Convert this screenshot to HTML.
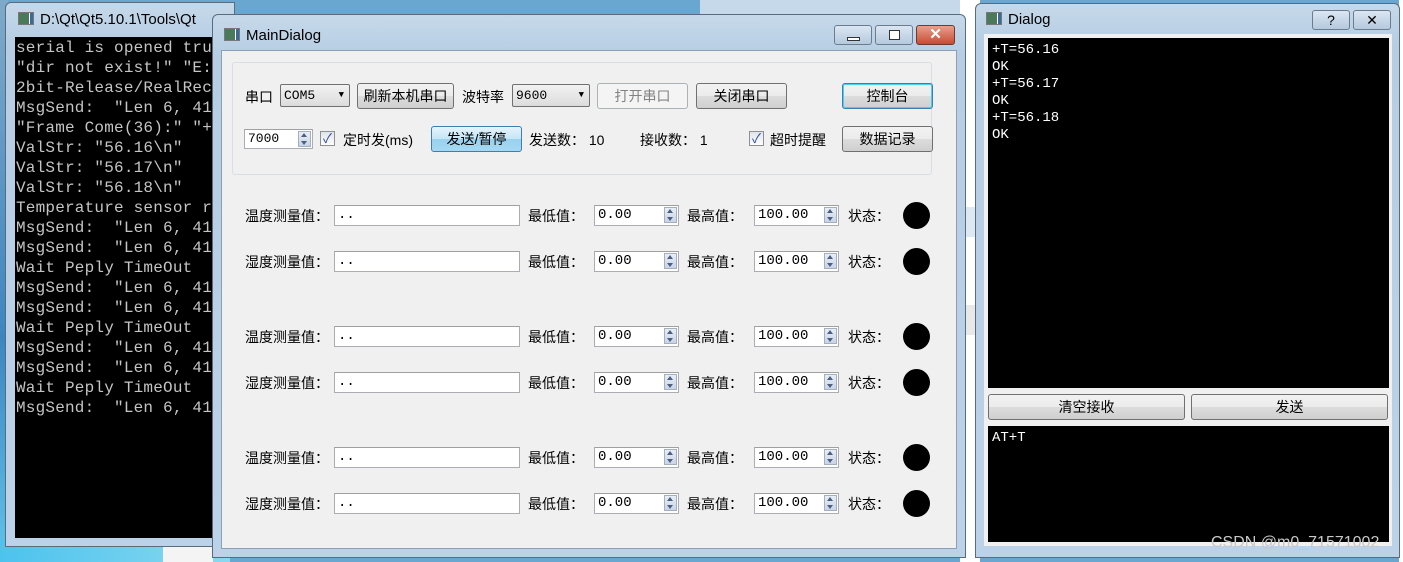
<!DOCTYPE html>
<html><head><meta charset="utf-8"><style>
*{box-sizing:border-box;margin:0;padding:0}
body{width:1403px;height:562px;overflow:hidden;background:#6aa7d0;position:relative;font-family:"Liberation Sans","Noto Sans CJK SC",sans-serif;font-size:14px;color:#000}
.a{position:absolute}
.frame{background:linear-gradient(#c6d9ea,#b6cde3 40px,#bcd2e8);border:1px solid #5a6b7c;border-radius:6px 6px 0 0}
.title{font-size:15px;color:#000;white-space:nowrap}
.icon{display:inline-block;width:16px;height:13px;background:linear-gradient(90deg,#4a7a5a 0 10px,#fff 10px 11px,#3a6a9a 11px);border:1px solid #777;vertical-align:-1px;margin-right:6px}
.con{background:#000;color:#c4c4c4;font-family:"Liberation Mono",monospace;font-size:16px;line-height:20px;white-space:pre;overflow:hidden;letter-spacing:0.2px}
.client{background:#f0f0f0}
.btn{border:1px solid #707070;border-radius:3px;background:linear-gradient(#f2f2f2,#ebebeb 50%,#dddddd 50%,#cfcfcf);text-align:center;font-size:14px;line-height:24px}
.inp{background:#fff;border:1px solid #abadb3;border-top-color:#a0a0a0;font-family:"Liberation Mono","Noto Sans CJK SC",monospace;font-size:14px;line-height:18px;padding-left:3px}
.spin{position:absolute;right:1px;top:1px;width:13px;height:16px;border:1px solid #a4afc0;background:linear-gradient(#e8eef6,#c8d4e6)}
.spin:before{content:"";position:absolute;left:2px;top:1px;border:3px solid transparent;border-bottom:4px solid #4d5f80;border-top:0}
.spin:after{content:"";position:absolute;left:2px;bottom:1px;border:3px solid transparent;border-top:4px solid #4d5f80;border-bottom:0}
.lbl{font-size:14px;white-space:nowrap}
.dot{width:27px;height:27px;border-radius:50%;background:#000}
.chk{width:15px;height:15px;border:1px solid #8e8f8f;background:linear-gradient(#e0e4ea,#fdfdfd);font-size:13px;line-height:13px;text-align:center;color:#2a4a9a}
.cb{font-family:"Liberation Mono","Noto Sans CJK SC",monospace;color:#fff;font-size:14px;line-height:17px;white-space:pre}
</style></head><body>
<!-- desktop left strip -->
<div class="a" style="left:0;top:0;width:8px;height:562px;background:linear-gradient(#7fa9c9,#3c86c0 60%,#5fc4ea)"></div>
<div class="a" style="left:0;top:540px;width:230px;height:22px;background:linear-gradient(90deg,#4cc3ee,#8ad8f0)"></div>
<div class="a" style="left:163px;top:547px;width:50px;height:15px;background:#f4f4f4"></div>
<!-- console window -->
<div class="a frame" style="left:5px;top:2px;width:230px;height:545px;border-radius:6px 0 0 0"></div>
<div class="a title" style="left:18px;top:11px"><span class="icon"></span>D:\Qt\Qt5.10.1\Tools\Qt</div>
<div class="a con" style="left:15px;top:37px;width:205px;height:501px;padding-left:1px;padding-top:1px">serial is opened tru
"dir not exist!" "E:
2bit-Release/RealRec
MsgSend:  "Len 6, 41
"Frame Come(36):" "+
ValStr: "56.16\n"
ValStr: "56.17\n"
ValStr: "56.18\n"
Temperature sensor r
MsgSend:  "Len 6, 41
MsgSend:  "Len 6, 41
Wait Peply TimeOut
MsgSend:  "Len 6, 41
MsgSend:  "Len 6, 41
Wait Peply TimeOut
MsgSend:  "Len 6, 41
MsgSend:  "Len 6, 41
Wait Peply TimeOut
MsgSend:  "Len 6, 41</div>
<!-- window behind between -->
<div class="a" style="left:700px;top:0;width:275px;height:14px;background:#c6d9ea;border-right:1px solid #555"></div>
<div class="a" style="left:960px;top:0;width:20px;height:562px;background:#fff"></div>
<div class="a" style="left:960px;top:207px;width:20px;height:30px;background:#dde8f3"></div>
<div class="a" style="left:960px;top:305px;width:20px;height:30px;background:#e8e8e8"></div>
<div class="a" style="left:1399px;top:0;width:4px;height:562px;background:#fff"></div>
<!-- MainDialog -->
<div class="a frame" style="left:212px;top:14px;width:754px;height:544px"></div>
<div class="a title" style="left:224px;top:27px"><span class="icon"></span>MainDialog</div>
<div class="a" style="left:834px;top:25px;width:38px;height:20px;border:1px solid #6b7c8e;border-radius:3px;background:linear-gradient(#dbe6f2,#b5c9de)"><div class="a" style="left:12px;top:11px;width:13px;height:4px;background:#fff;border:1px solid #333"></div></div>
<div class="a" style="left:875px;top:25px;width:38px;height:20px;border:1px solid #6b7c8e;border-radius:3px;background:linear-gradient(#dbe6f2,#b5c9de)"><div class="a" style="left:13px;top:4px;width:11px;height:10px;background:#fff;border:1px solid #333"></div></div>
<div class="a" style="left:916px;top:25px;width:39px;height:20px;border:1px solid #6b3a30;border-radius:3px;background:linear-gradient(#e8a08e,#c74b32);color:#fff;font-weight:bold;text-align:center;line-height:18px;font-size:15px">✕</div>
<div class="a client" style="left:221px;top:50px;width:736px;height:499px;border:1px solid #8aa0b8"></div>
<div class="a" style="left:232px;top:62px;width:700px;height:113px;border:1px solid #d5dfe5;border-radius:3px"></div>
<!-- row 1 -->
<div class="a lbl" style="left:245px;top:87px">串口</div>
<div class="a inp" style="left:280px;top:84px;width:70px;height:23px;background:linear-gradient(#f2f2f2,#dcdcdc);border-color:#707070;border-radius:2px;line-height:21px;font-size:13px">COM5<span style="position:absolute;right:5px;font-size:9px">▼</span></div>
<div class="a btn" style="left:357px;top:83px;width:97px;height:26px">刷新本机串口</div>
<div class="a lbl" style="left:462px;top:87px">波特率</div>
<div class="a inp" style="left:512px;top:84px;width:78px;height:23px;background:linear-gradient(#f2f2f2,#dcdcdc);border-color:#707070;border-radius:2px;line-height:21px;font-size:13px">9600<span style="position:absolute;right:5px;font-size:9px">▼</span></div>
<div class="a btn" style="left:597px;top:83px;width:91px;height:26px;background:#f4f4f4;border-color:#adb2b5;color:#838383">打开串口</div>
<div class="a btn" style="left:696px;top:83px;width:91px;height:26px">关闭串口</div>
<div class="a btn" style="left:842px;top:83px;width:91px;height:26px;border-color:#3c7fb1;box-shadow:inset 0 0 0 1px #48d0f0">控制台</div>
<!-- row 2 -->
<div class="a inp" style="left:244px;top:129px;width:69px;height:20px;font-size:13px">7000<div class="spin"></div></div>
<div class="a chk" style="left:320px;top:131px">✓</div>
<div class="a lbl" style="left:343px;top:130px">定时发(ms)</div>
<div class="a btn" style="left:431px;top:126px;width:91px;height:26px;border-color:#3c7fb1;background:linear-gradient(#e5f4fc,#c4e5f6 50%,#98d1ef 50%,#a6d8f2)">发送/暂停</div>
<div class="a lbl" style="left:529px;top:130px">发送数： 10</div>
<div class="a lbl" style="left:640px;top:130px">接收数： 1</div>
<div class="a chk" style="left:749px;top:131px">✓</div>
<div class="a lbl" style="left:770px;top:130px">超时提醒</div>
<div class="a btn" style="left:842px;top:126px;width:91px;height:26px">数据记录</div>
<!-- measurement rows -->
<div id="rows"></div>
<!-- Dialog -->
<div class="a frame" style="left:975px;top:3px;width:425px;height:555px"></div>
<div class="a title" style="left:986px;top:11px"><span class="icon"></span>Dialog</div>
<div class="a" style="left:1312px;top:10px;width:38px;height:20px;border:1px solid #6b7c8e;border-radius:3px;background:linear-gradient(#dbe6f2,#b5c9de);text-align:center;font-size:14px;line-height:18px">?</div>
<div class="a" style="left:1353px;top:10px;width:38px;height:20px;border:1px solid #6b7c8e;border-radius:3px;background:linear-gradient(#dbe6f2,#b5c9de);text-align:center;font-size:14px;line-height:18px">✕</div>
<div class="a client" style="left:984px;top:34px;width:408px;height:512px"></div>
<div class="a" style="left:988px;top:38px;width:401px;height:350px;background:#000;padding:4px 4px"><div class="cb">+T=56.16
OK
+T=56.17
OK
+T=56.18
OK</div></div>
<div class="a btn" style="left:988px;top:394px;width:197px;height:26px">清空接收</div>
<div class="a btn" style="left:1191px;top:394px;width:197px;height:26px">发送</div>
<div class="a" style="left:988px;top:426px;width:401px;height:116px;background:#000;padding:4px 4px"><div class="cb">AT+T</div></div>
<div class="a" style="left:1211px;top:534px;font-size:16px;color:#c8c8c8;white-space:nowrap">CSDN @m0_71571002</div>
<script>
var ys=[215,261,336,382,457,503],h="";
ys.forEach(function(y,i){var t=i%2?"湿度测量值：":"温度测量值：";
h+='<div class="a lbl" style="left:245px;top:'+(y-9)+'px">'+t+'</div>'+
'<div class="a inp" style="left:334px;top:'+(y-10)+'px;width:186px;height:21px">..</div>'+
'<div class="a lbl" style="left:528px;top:'+(y-9)+'px">最低值：</div>'+
'<div class="a inp" style="left:594px;top:'+(y-10)+'px;width:85px;height:21px">0.00<div class="spin"></div></div>'+
'<div class="a lbl" style="left:687px;top:'+(y-9)+'px">最高值：</div>'+
'<div class="a inp" style="left:754px;top:'+(y-10)+'px;width:85px;height:21px">100.00<div class="spin"></div></div>'+
'<div class="a lbl" style="left:848px;top:'+(y-9)+'px">状态：</div>'+
'<div class="a dot" style="left:903px;top:'+(y-13)+'px"></div>';});
document.getElementById("rows").outerHTML=h;
</script>
</body></html>
